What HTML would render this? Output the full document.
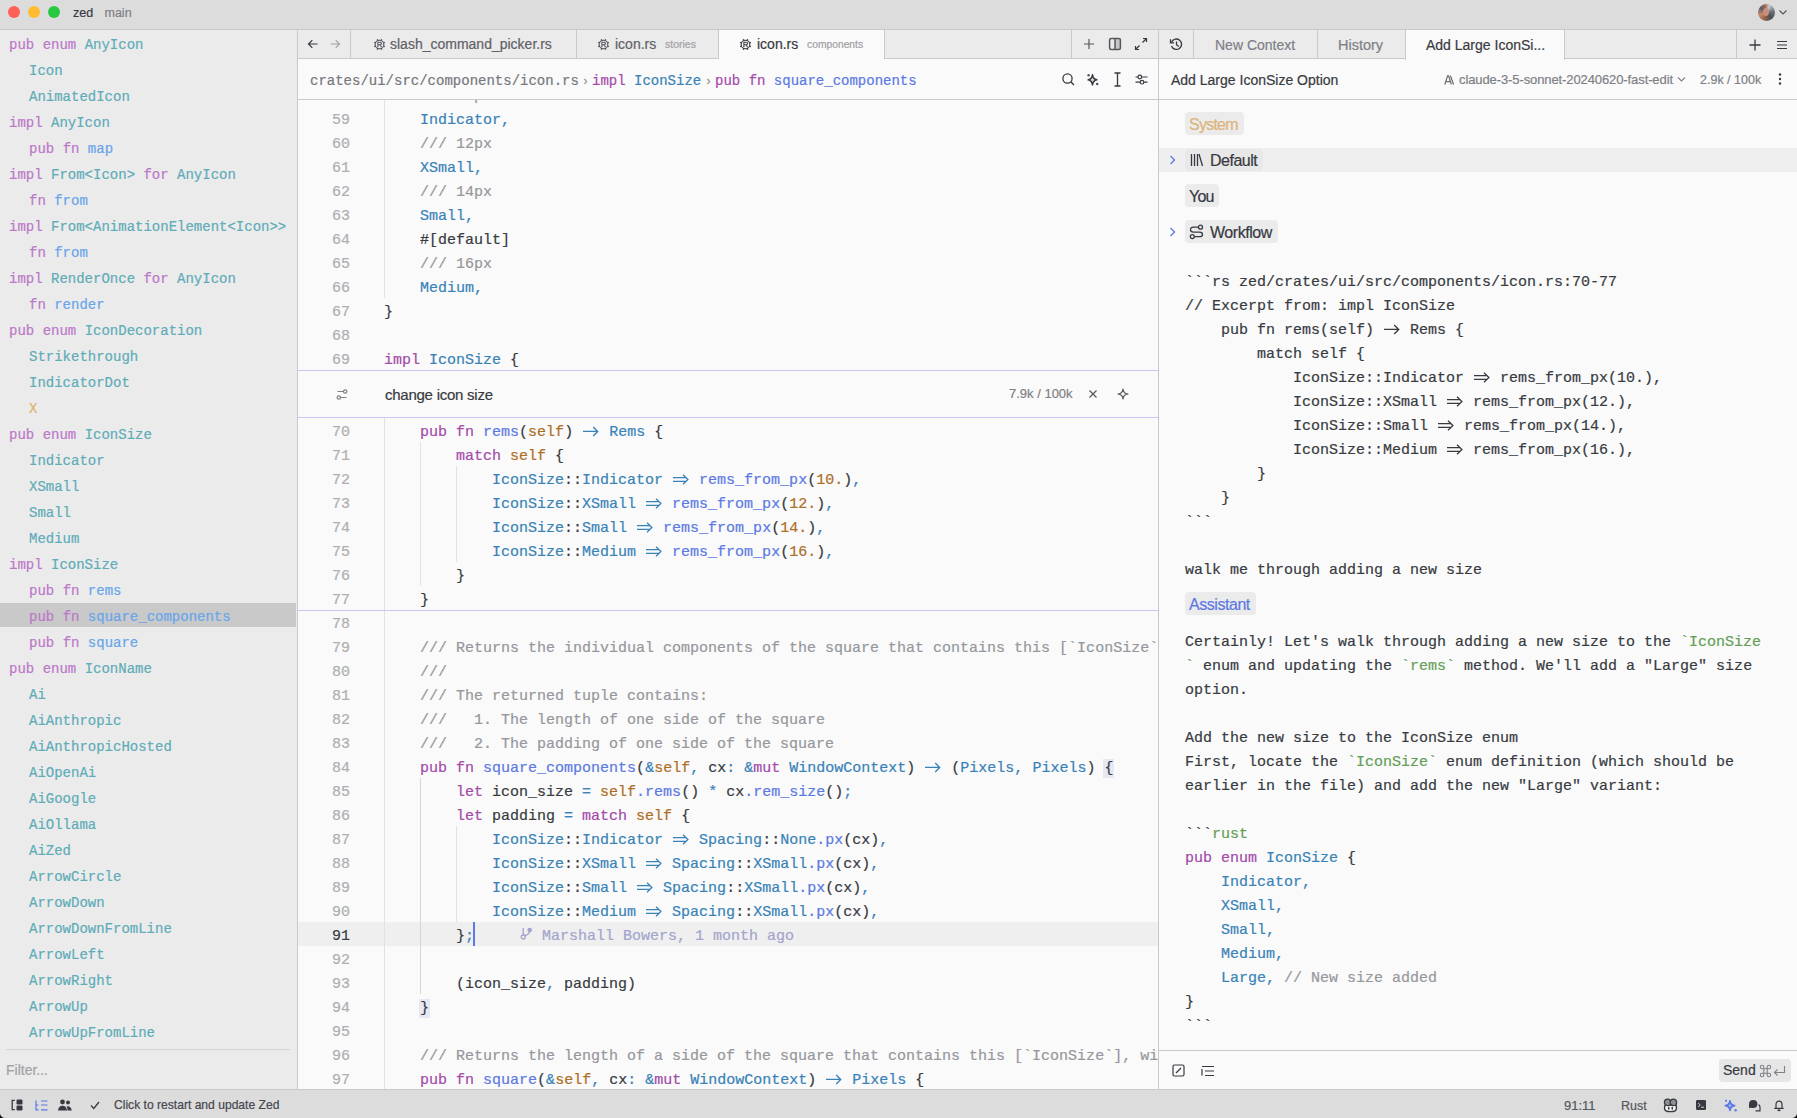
<!DOCTYPE html>
<html><head><meta charset="utf-8">
<style>
*{box-sizing:border-box;margin:0;padding:0}
html,body{-webkit-text-stroke:0.2px currentColor;width:1797px;height:1118px;overflow:hidden;background:#dcdcdd;font-family:"Liberation Sans",sans-serif;color:#383a41}
.abs{position:absolute}
svg{display:block}
/* title */
#title{position:absolute;left:0;top:0;width:1797px;height:30px;background:#dcdcdd;border-bottom:1px solid #c9c9ca}
.tl{position:absolute;top:6px;width:12px;height:12px;border-radius:50%}
/* outline */
#outline{position:absolute;left:0;top:30px;width:298px;height:1059px;background:#ebebec;border-right:1px solid #c9c9ca;overflow:hidden}
.orow{position:absolute;left:0;width:297px;height:26px}
.orow>span{position:absolute;top:1.5px;line-height:26px;font-family:"Liberation Mono",monospace;font-size:14px;white-space:pre;color:#5aa9b4}
.orow.sel{background:linear-gradient(#ebebec 0,#ebebec 1px,#c9c9ca 1px,#c9c9ca 25px,#ebebec 25px);width:296px}
.orow .k{color:#bb78c8}
.orow .t{color:#5eacb7}
.orow .f{color:#68a5ea}
.orow .x{color:#dcb46c}
/* editor pane */
#pane{position:absolute;left:298px;top:30px;width:860px;height:1059px;background:#fafafa;overflow:hidden}
#tabs{position:absolute;left:0;top:0;width:860px;height:29px;background:#ebebec;border-bottom:1px solid #c9c9ca}
.tab{position:absolute;top:0;height:29px;font-size:14px;line-height:28px;white-space:pre;color:#7e8086}
#crumb{position:absolute;left:0;top:29px;width:860px;height:41px;border-bottom:1px solid #c9c9ca;background:#fafafa}
#ed{position:absolute;left:0;top:70px;width:860px;height:989px;overflow:hidden;background:#fafafa}
.lrow{position:absolute;left:0;width:860px;height:24px}
.lrow.act{background:#efeff0}
.ln{position:absolute;right:808px;top:2.5px;line-height:24px;font-family:"Liberation Mono",monospace;font-size:15px;color:#adaeb0}
.lrow.act .ln{color:#383a41}
.lc{position:absolute;left:86px;top:2.5px;line-height:24px;font-family:"Liberation Mono",monospace;font-size:15px;white-space:pre;color:#383a41}
.k{color:#a449ab}
.t{color:#3882b7}
.f{color:#5b79e3}
.s{color:#ad6e26}
.c{color:#96979c}
.o{color:#3882b7}
.g{color:#649f57}
.bm{background:#e6e8f4;outline:1px solid #e6e8f4}
.ar{display:inline-block;width:18px;height:24px;vertical-align:top}
.dar{display:inline-block;width:18px;height:24px;vertical-align:top}
.dar svg{display:inline-block}
/* assistant */
#asst{position:absolute;left:1159px;top:30px;width:638px;height:1059px;background:#fafafa;overflow:hidden}
#atabs{position:absolute;left:0;top:0;width:638px;height:29px;background:#ebebec;border-bottom:1px solid #c9c9ca}
#ahead{position:absolute;left:0;top:29px;width:638px;height:41px;border-bottom:1px solid #c9c9ca}
#abody{position:absolute;left:0;top:70px;width:638px;height:950px;overflow:hidden}
.arow{position:absolute;left:26px;height:24px;line-height:24px;font-family:"Liberation Mono",monospace;font-size:15px;white-space:pre;color:#383a41}
.badge{position:absolute;height:23px;line-height:25px;border-radius:4px;background:#ebebec;font-size:15px;padding:0 4px}
#afoot{position:absolute;left:0;top:1020px;width:638px;height:39px;border-top:1px solid #c9c9ca;background:#fafafa}
/* status */
#status{position:absolute;left:0;top:1089px;width:1797px;height:29px;background:#dcdcdd;border-top:1px solid #c9c9ca}
.st{position:absolute;top:1px;line-height:28px;font-size:12px;color:#383a41;white-space:pre}
.ico{position:absolute}
</style></head><body>

<div id="title">
  <div class="tl" style="left:8px;background:#fe5f57;"></div>
  <div class="tl" style="left:28px;background:#febc2e;"></div>
  <div class="tl" style="left:48px;background:#28c840;"></div>
  <div class="abs" style="left:73px;top:0;line-height:26px;font-size:12.5px;color:#383a41">zed</div>
  <div class="abs" style="left:104.5px;top:0;line-height:26px;font-size:12.5px;color:#7e8086">main</div>
  <div class="abs" style="left:1757.5px;top:3.5px;width:17px;height:17px;border-radius:50%;background:conic-gradient(from 20deg,#c9ccd2 0,#6a6f78 60deg,#4a4e56 120deg,#9a6248 180deg,#c58a70 230deg,#5a5e66 290deg,#a46a50 330deg,#c9ccd2 360deg)"></div>
  <div class="abs" style="left:1763px;top:8px;width:6px;height:8px;border-radius:50%;background:#c8907a"></div>
  <svg class="ico" style="left:1778px;top:8px" width="10" height="8" viewBox="0 0 10 8"><path d="M1.5 2.5L5 6L8.5 2.5" fill="none" stroke="#55575c" stroke-width="1.2"/></svg>
</div>

<div id="outline">
<div class="orow" style="top:0px"><span style="left:9px"><span class="k">pub</span> <span class="k">enum</span> <span class="t">AnyIcon</span></span></div>
<div class="orow" style="top:26px"><span style="left:29px"><span class="t">Icon</span></span></div>
<div class="orow" style="top:52px"><span style="left:29px"><span class="t">AnimatedIcon</span></span></div>
<div class="orow" style="top:78px"><span style="left:9px"><span class="k">impl</span> <span class="t">AnyIcon</span></span></div>
<div class="orow" style="top:104px"><span style="left:29px"><span class="k">pub</span> <span class="k">fn</span> <span class="f">map</span></span></div>
<div class="orow" style="top:130px"><span style="left:9px"><span class="k">impl</span> <span class="t">From&lt;Icon&gt;</span> <span class="k">for</span> <span class="t">AnyIcon</span></span></div>
<div class="orow" style="top:156px"><span style="left:29px"><span class="k">fn</span> <span class="f">from</span></span></div>
<div class="orow" style="top:182px"><span style="left:9px"><span class="k">impl</span> <span class="t">From&lt;AnimationElement&lt;Icon&gt;&gt;</span></span></div>
<div class="orow" style="top:208px"><span style="left:29px"><span class="k">fn</span> <span class="f">from</span></span></div>
<div class="orow" style="top:234px"><span style="left:9px"><span class="k">impl</span> <span class="t">RenderOnce</span> <span class="k">for</span> <span class="t">AnyIcon</span></span></div>
<div class="orow" style="top:260px"><span style="left:29px"><span class="k">fn</span> <span class="f">render</span></span></div>
<div class="orow" style="top:286px"><span style="left:9px"><span class="k">pub</span> <span class="k">enum</span> <span class="t">IconDecoration</span></span></div>
<div class="orow" style="top:312px"><span style="left:29px"><span class="t">Strikethrough</span></span></div>
<div class="orow" style="top:338px"><span style="left:29px"><span class="t">IndicatorDot</span></span></div>
<div class="orow" style="top:364px"><span style="left:29px"><span class="x">X</span></span></div>
<div class="orow" style="top:390px"><span style="left:9px"><span class="k">pub</span> <span class="k">enum</span> <span class="t">IconSize</span></span></div>
<div class="orow" style="top:416px"><span style="left:29px"><span class="t">Indicator</span></span></div>
<div class="orow" style="top:442px"><span style="left:29px"><span class="t">XSmall</span></span></div>
<div class="orow" style="top:468px"><span style="left:29px"><span class="t">Small</span></span></div>
<div class="orow" style="top:494px"><span style="left:29px"><span class="t">Medium</span></span></div>
<div class="orow" style="top:520px"><span style="left:9px"><span class="k">impl</span> <span class="t">IconSize</span></span></div>
<div class="orow" style="top:546px"><span style="left:29px"><span class="k">pub</span> <span class="k">fn</span> <span class="f">rems</span></span></div>
<div class="orow sel" style="top:572px"><span style="left:29px"><span class="k">pub</span> <span class="k">fn</span> <span class="f">square_components</span></span></div>
<div class="orow" style="top:598px"><span style="left:29px"><span class="k">pub</span> <span class="k">fn</span> <span class="f">square</span></span></div>
<div class="orow" style="top:624px"><span style="left:9px"><span class="k">pub</span> <span class="k">enum</span> <span class="t">IconName</span></span></div>
<div class="orow" style="top:650px"><span style="left:29px"><span class="t">Ai</span></span></div>
<div class="orow" style="top:676px"><span style="left:29px"><span class="t">AiAnthropic</span></span></div>
<div class="orow" style="top:702px"><span style="left:29px"><span class="t">AiAnthropicHosted</span></span></div>
<div class="orow" style="top:728px"><span style="left:29px"><span class="t">AiOpenAi</span></span></div>
<div class="orow" style="top:754px"><span style="left:29px"><span class="t">AiGoogle</span></span></div>
<div class="orow" style="top:780px"><span style="left:29px"><span class="t">AiOllama</span></span></div>
<div class="orow" style="top:806px"><span style="left:29px"><span class="t">AiZed</span></span></div>
<div class="orow" style="top:832px"><span style="left:29px"><span class="t">ArrowCircle</span></span></div>
<div class="orow" style="top:858px"><span style="left:29px"><span class="t">ArrowDown</span></span></div>
<div class="orow" style="top:884px"><span style="left:29px"><span class="t">ArrowDownFromLine</span></span></div>
<div class="orow" style="top:910px"><span style="left:29px"><span class="t">ArrowLeft</span></span></div>
<div class="orow" style="top:936px"><span style="left:29px"><span class="t">ArrowRight</span></span></div>
<div class="orow" style="top:962px"><span style="left:29px"><span class="t">ArrowUp</span></span></div>
<div class="orow" style="top:988px"><span style="left:29px"><span class="t">ArrowUpFromLine</span></span></div>
  <div class="abs" style="left:6px;top:1019px;width:284px;height:1px;background:#d5d5d6"></div>
  <div class="abs" style="left:6px;top:1027px;line-height:26px;font-size:14px;color:#a1a1a3">Filter...</div>
</div>

<div id="pane">
  <div id="tabs">
    <div class="abs" style="left:0;top:0;width:53px;height:29px;border-right:1px solid #c9c9ca"></div>
    <svg class="ico" style="left:8px;top:7px" width="14" height="14" viewBox="0 0 14 14"><path d="M11.5 7H2.5M6.3 3.2L2.5 7L6.3 10.8" fill="none" stroke="#383a41" stroke-width="1.2"/></svg>
    <svg class="ico" style="left:30px;top:7px" width="14" height="14" viewBox="0 0 14 14"><path d="M2.5 7H11.5M7.7 3.2L11.5 7L7.7 10.8" fill="none" stroke="#a1a1a3" stroke-width="1.1"/></svg>
    <div class="tab" style="left:52px;width:227px;border-right:1px solid #c9c9ca"></div>
    <div class="tab" style="left:279px;width:142px;border-right:1px solid #c9c9ca"></div>
    <div class="tab" style="left:421px;width:166px;height:30px;background:#fafafa;border-right:1px solid #c9c9ca"></div>
    <svg class="ico" style="left:74.5px;top:7.5px" width="13" height="13" viewBox="0 0 13 13"><circle cx="6.5" cy="6.5" r="4.3" fill="none" stroke="#55575c" stroke-width="1.1"/><path d="M10.47 8.15L11.86 8.72M8.15 10.47L8.72 11.86M4.85 10.47L4.28 11.86M2.53 8.15L1.14 8.72M2.53 4.85L1.14 4.28M4.85 2.53L4.28 1.14M8.15 2.53L8.72 1.14M10.47 4.85L11.86 4.28" stroke="#55575c" stroke-width="1.3"/><path d="M4.9 9.2V4.3H7.2Q8.5 4.3 8.5 5.5Q8.5 6.7 7.2 6.7H4.9M7 6.7L8.6 9.2" fill="none" stroke="#55575c" stroke-width="1.1"/></svg><div class="tab" style="left:92px;color:#5f6166">slash_command_picker.rs</div><svg class="ico" style="left:298.5px;top:7.5px" width="13" height="13" viewBox="0 0 13 13"><circle cx="6.5" cy="6.5" r="4.3" fill="none" stroke="#55575c" stroke-width="1.1"/><path d="M10.47 8.15L11.86 8.72M8.15 10.47L8.72 11.86M4.85 10.47L4.28 11.86M2.53 8.15L1.14 8.72M2.53 4.85L1.14 4.28M4.85 2.53L4.28 1.14M8.15 2.53L8.72 1.14M10.47 4.85L11.86 4.28" stroke="#55575c" stroke-width="1.3"/><path d="M4.9 9.2V4.3H7.2Q8.5 4.3 8.5 5.5Q8.5 6.7 7.2 6.7H4.9M7 6.7L8.6 9.2" fill="none" stroke="#55575c" stroke-width="1.1"/></svg><div class="tab" style="left:317px;color:#5f6166">icon.rs</div><div class="tab" style="left:367px;font-size:10.5px;line-height:29px;color:#a1a1a3">stories</div><svg class="ico" style="left:440.5px;top:7.5px" width="13" height="13" viewBox="0 0 13 13"><circle cx="6.5" cy="6.5" r="4.3" fill="none" stroke="#383a41" stroke-width="1.1"/><path d="M10.47 8.15L11.86 8.72M8.15 10.47L8.72 11.86M4.85 10.47L4.28 11.86M2.53 8.15L1.14 8.72M2.53 4.85L1.14 4.28M4.85 2.53L4.28 1.14M8.15 2.53L8.72 1.14M10.47 4.85L11.86 4.28" stroke="#383a41" stroke-width="1.3"/><path d="M4.9 9.2V4.3H7.2Q8.5 4.3 8.5 5.5Q8.5 6.7 7.2 6.7H4.9M7 6.7L8.6 9.2" fill="none" stroke="#383a41" stroke-width="1.1"/></svg><div class="tab" style="left:459px;color:#383a41">icon.rs</div><div class="tab" style="left:509px;font-size:10.3px;line-height:29px;color:#a1a1a3">components</div>
    <div class="abs" style="left:773px;top:0;width:1px;height:29px;background:#c9c9ca"></div>
    <svg class="ico" style="left:784px;top:7px" width="14" height="14" viewBox="0 0 14 14"><path d="M7 2V12M2 7H12" stroke="#55575c" stroke-width="1.2"/></svg><svg class="ico" style="left:810px;top:7px" width="14" height="14" viewBox="0 0 14 14"><rect x="7" y="2" width="5" height="10" fill="#c5c5c7"/><rect x="1.6" y="1.6" width="10.8" height="10.8" rx="1.5" fill="none" stroke="#55575c" stroke-width="1.5"/><path d="M7 1.5V12.5" stroke="#55575c" stroke-width="1.5"/></svg><svg class="ico" style="left:836px;top:7px" width="14" height="14" viewBox="0 0 14 14"><path d="M8.5 5.5L12.5 1.5M9 1.5H12.5V5M5.5 8.5L1.5 12.5M1.5 9V12.5H5" fill="none" stroke="#383a41" stroke-width="1.2"/></svg>
  </div>
  <div id="crumb">
    <div class="abs" style="left:12px;top:2px;line-height:41px;font-family:'Liberation Mono',monospace;font-size:14px;color:#76787d;white-space:pre">crates/ui/src/components/icon.rs</div><div class="abs" style="left:285.5px;top:1.5px;line-height:40px;font-size:12px;color:#8e9095">›</div><div class="abs" style="left:294px;top:2px;line-height:41px;font-family:'Liberation Mono',monospace;font-size:14px;white-space:pre"><span class="k">impl</span> <span class="t">IconSize</span></div><div class="abs" style="left:408.5px;top:1.5px;line-height:40px;font-size:12px;color:#8e9095">›</div><div class="abs" style="left:417px;top:2px;line-height:41px;font-family:'Liberation Mono',monospace;font-size:14px;white-space:pre"><span class="k">pub</span> <span class="k">fn</span> <span class="f">square_components</span></div><svg class="ico" style="left:763px;top:13px" width="15" height="15" viewBox="0 0 15 15"><circle cx="6.5" cy="6.5" r="4.6" fill="none" stroke="#383a41" stroke-width="1.3"/><path d="M10 10L13 13" stroke="#383a41" stroke-width="1.4"/></svg><svg class="ico" style="left:788px;top:13px" width="15" height="15" viewBox="0 0 15 15"><path d="M6.5 2.8Q7 7 10.8 7.8Q7 8.6 6.5 12.8Q6 8.6 2.2 7.8Q6 7 6.5 2.8Z" fill="#d8d8da" stroke="#383a41" stroke-width="1.6" stroke-linejoin="round"/><circle cx="2.6" cy="3.2" r="1.2" fill="#55575c"/><circle cx="11.2" cy="12" r="1.3" fill="#55575c"/></svg><svg class="ico" style="left:812px;top:12px" width="15" height="17" viewBox="0 0 15 17"><path d="M4.5 2H10.5M4.5 15H10.5M7.5 2.5V14.5" fill="none" stroke="#383a41" stroke-width="1.3"/></svg><svg class="ico" style="left:836px;top:13px" width="15" height="15" viewBox="0 0 15 15"><path d="M1.5 5H4M7.5 5H13.5M1.5 10.2H6M10 10.2H13.5" stroke="#383a41" stroke-width="1.2"/><circle cx="5.8" cy="5" r="1.8" fill="none" stroke="#383a41" stroke-width="1.2"/><circle cx="8" cy="10.2" r="1.8" fill="none" stroke="#383a41" stroke-width="1.2"/></svg>
  </div>
  <div id="ed">
<div class="lrow" style="top:-18px"><span class="ln">58</span><span class="lc">    <span class="c">/// 10px</span></span></div>
<div class="lrow" style="top:6px"><span class="ln">59</span><span class="lc">    <span class="t">Indicator</span><span class="o">,</span></span></div>
<div class="lrow" style="top:30px"><span class="ln">60</span><span class="lc">    <span class="c">/// 12px</span></span></div>
<div class="lrow" style="top:54px"><span class="ln">61</span><span class="lc">    <span class="t">XSmall</span><span class="o">,</span></span></div>
<div class="lrow" style="top:78px"><span class="ln">62</span><span class="lc">    <span class="c">/// 14px</span></span></div>
<div class="lrow" style="top:102px"><span class="ln">63</span><span class="lc">    <span class="t">Small</span><span class="o">,</span></span></div>
<div class="lrow" style="top:126px"><span class="ln">64</span><span class="lc">    #[default]</span></div>
<div class="lrow" style="top:150px"><span class="ln">65</span><span class="lc">    <span class="c">/// 16px</span></span></div>
<div class="lrow" style="top:174px"><span class="ln">66</span><span class="lc">    <span class="t">Medium</span><span class="o">,</span></span></div>
<div class="lrow" style="top:198px"><span class="ln">67</span><span class="lc">}</span></div>
<div class="lrow" style="top:222px"><span class="ln">68</span><span class="lc"></span></div>
<div class="lrow" style="top:246px"><span class="ln">69</span><span class="lc"><span class="k">impl</span> <span class="t">IconSize</span> {</span></div>
<div class="lrow" style="top:318px"><span class="ln">70</span><span class="lc">    <span class="k">pub</span> <span class="k">fn</span> <span class="f">rems</span>(<span class="s">self</span>) <span class="o"><span class="ar"><svg width="18" height="24" viewBox="0 0 18 24"><path d="M1 10.4H15.6M11.2 5.9L15.7 10.4L11.2 14.9" fill="none" stroke="currentColor" stroke-width="1.35"/></svg></span></span> <span class="t">Rems</span> {</span></div>
<div class="lrow" style="top:342px"><span class="ln">71</span><span class="lc">        <span class="k">match</span> <span class="s">self</span> {</span></div>
<div class="lrow" style="top:366px"><span class="ln">72</span><span class="lc">            <span class="t">IconSize</span>::<span class="t">Indicator</span> <span class="o"><span class="dar"><svg width="18" height="24" viewBox="0 0 18 24"><path d="M1 8.6H14.2M1 12.3H14.2M11 5.7L15.9 10.45L11 15.2" fill="none" stroke="currentColor" stroke-width="1.3"/></svg></span></span> <span class="f">rems_from_px</span>(<span class="s">10.</span>)<span class="o">,</span></span></div>
<div class="lrow" style="top:390px"><span class="ln">73</span><span class="lc">            <span class="t">IconSize</span>::<span class="t">XSmall</span> <span class="o"><span class="dar"><svg width="18" height="24" viewBox="0 0 18 24"><path d="M1 8.6H14.2M1 12.3H14.2M11 5.7L15.9 10.45L11 15.2" fill="none" stroke="currentColor" stroke-width="1.3"/></svg></span></span> <span class="f">rems_from_px</span>(<span class="s">12.</span>)<span class="o">,</span></span></div>
<div class="lrow" style="top:414px"><span class="ln">74</span><span class="lc">            <span class="t">IconSize</span>::<span class="t">Small</span> <span class="o"><span class="dar"><svg width="18" height="24" viewBox="0 0 18 24"><path d="M1 8.6H14.2M1 12.3H14.2M11 5.7L15.9 10.45L11 15.2" fill="none" stroke="currentColor" stroke-width="1.3"/></svg></span></span> <span class="f">rems_from_px</span>(<span class="s">14.</span>)<span class="o">,</span></span></div>
<div class="lrow" style="top:438px"><span class="ln">75</span><span class="lc">            <span class="t">IconSize</span>::<span class="t">Medium</span> <span class="o"><span class="dar"><svg width="18" height="24" viewBox="0 0 18 24"><path d="M1 8.6H14.2M1 12.3H14.2M11 5.7L15.9 10.45L11 15.2" fill="none" stroke="currentColor" stroke-width="1.3"/></svg></span></span> <span class="f">rems_from_px</span>(<span class="s">16.</span>)<span class="o">,</span></span></div>
<div class="lrow" style="top:462px"><span class="ln">76</span><span class="lc">        }</span></div>
<div class="lrow" style="top:486px"><span class="ln">77</span><span class="lc">    }</span></div>
<div class="lrow" style="top:510px"><span class="ln">78</span><span class="lc"></span></div>
<div class="lrow" style="top:534px"><span class="ln">79</span><span class="lc">    <span class="c">/// Returns the individual components of the square that contains this [`IconSize`], with padding.</span></span></div>
<div class="lrow" style="top:558px"><span class="ln">80</span><span class="lc">    <span class="c">///</span></span></div>
<div class="lrow" style="top:582px"><span class="ln">81</span><span class="lc">    <span class="c">/// The returned tuple contains:</span></span></div>
<div class="lrow" style="top:606px"><span class="ln">82</span><span class="lc">    <span class="c">///   1. The length of one side of the square</span></span></div>
<div class="lrow" style="top:630px"><span class="ln">83</span><span class="lc">    <span class="c">///   2. The padding of one side of the square</span></span></div>
<div class="lrow" style="top:654px"><span class="ln">84</span><span class="lc">    <span class="k">pub</span> <span class="k">fn</span> <span class="f">square_components</span>(<span class="o">&amp;</span><span class="s">self</span><span class="o">,</span> cx<span class="o">:</span> <span class="o">&amp;</span><span class="k">mut</span> <span class="t">WindowContext</span>) <span class="o"><span class="ar"><svg width="18" height="24" viewBox="0 0 18 24"><path d="M1 10.4H15.6M11.2 5.9L15.7 10.4L11.2 14.9" fill="none" stroke="currentColor" stroke-width="1.35"/></svg></span></span> (<span class="t">Pixels</span><span class="o">,</span> <span class="t">Pixels</span>) <span class="bm">{</span></span></div>
<div class="lrow" style="top:678px"><span class="ln">85</span><span class="lc">        <span class="k">let</span> icon_size <span class="o">=</span> <span class="s">self</span><span class="f">.rems</span>() <span class="o">*</span> cx<span class="f">.rem_size</span>()<span class="o">;</span></span></div>
<div class="lrow" style="top:702px"><span class="ln">86</span><span class="lc">        <span class="k">let</span> padding <span class="o">=</span> <span class="k">match</span> <span class="s">self</span> {</span></div>
<div class="lrow" style="top:726px"><span class="ln">87</span><span class="lc">            <span class="t">IconSize</span>::<span class="t">Indicator</span> <span class="o"><span class="dar"><svg width="18" height="24" viewBox="0 0 18 24"><path d="M1 8.6H14.2M1 12.3H14.2M11 5.7L15.9 10.45L11 15.2" fill="none" stroke="currentColor" stroke-width="1.3"/></svg></span></span> <span class="t">Spacing</span>::<span class="t">None</span><span class="f">.px</span>(cx)<span class="o">,</span></span></div>
<div class="lrow" style="top:750px"><span class="ln">88</span><span class="lc">            <span class="t">IconSize</span>::<span class="t">XSmall</span> <span class="o"><span class="dar"><svg width="18" height="24" viewBox="0 0 18 24"><path d="M1 8.6H14.2M1 12.3H14.2M11 5.7L15.9 10.45L11 15.2" fill="none" stroke="currentColor" stroke-width="1.3"/></svg></span></span> <span class="t">Spacing</span>::<span class="t">XSmall</span><span class="f">.px</span>(cx)<span class="o">,</span></span></div>
<div class="lrow" style="top:774px"><span class="ln">89</span><span class="lc">            <span class="t">IconSize</span>::<span class="t">Small</span> <span class="o"><span class="dar"><svg width="18" height="24" viewBox="0 0 18 24"><path d="M1 8.6H14.2M1 12.3H14.2M11 5.7L15.9 10.45L11 15.2" fill="none" stroke="currentColor" stroke-width="1.3"/></svg></span></span> <span class="t">Spacing</span>::<span class="t">XSmall</span><span class="f">.px</span>(cx)<span class="o">,</span></span></div>
<div class="lrow" style="top:798px"><span class="ln">90</span><span class="lc">            <span class="t">IconSize</span>::<span class="t">Medium</span> <span class="o"><span class="dar"><svg width="18" height="24" viewBox="0 0 18 24"><path d="M1 8.6H14.2M1 12.3H14.2M11 5.7L15.9 10.45L11 15.2" fill="none" stroke="currentColor" stroke-width="1.3"/></svg></span></span> <span class="t">Spacing</span>::<span class="t">XSmall</span><span class="f">.px</span>(cx)<span class="o">,</span></span></div>
<div class="lrow act" style="top:822px"><span class="ln">91</span><span class="lc">        }<span class="o">;</span></span></div>
<div class="lrow" style="top:846px"><span class="ln">92</span><span class="lc"></span></div>
<div class="lrow" style="top:870px"><span class="ln">93</span><span class="lc">        (icon_size<span class="o">,</span> padding)</span></div>
<div class="lrow" style="top:894px"><span class="ln">94</span><span class="lc">    <span class="bm">}</span></span></div>
<div class="lrow" style="top:918px"><span class="ln">95</span><span class="lc"></span></div>
<div class="lrow" style="top:942px"><span class="ln">96</span><span class="lc">    <span class="c">/// Returns the length of a side of the square that contains this [`IconSize`], with padding.</span></span></div>
<div class="lrow" style="top:966px"><span class="ln">97</span><span class="lc">    <span class="k">pub</span> <span class="k">fn</span> <span class="f">square</span>(<span class="o">&amp;</span><span class="s">self</span><span class="o">,</span> cx<span class="o">:</span> <span class="o">&amp;</span><span class="k">mut</span> <span class="t">WindowContext</span>) <span class="o"><span class="ar"><svg width="18" height="24" viewBox="0 0 18 24"><path d="M1 10.4H15.6M11.2 5.9L15.7 10.4L11.2 14.9" fill="none" stroke="currentColor" stroke-width="1.35"/></svg></span></span> <span class="t">Pixels</span> {</span></div>
<div class="lrow" style="top:990px"><span class="ln">98</span><span class="lc">        <span class="k">let</span> icon_size <span class="o">=</span> <span class="s">self</span><span class="f">.rems</span>() <span class="o">*</span> cx<span class="f">.rem_size</span>()<span class="o">;</span></span></div>
    <div class="abs" style="left:86px;top:0px;width:1px;height:198px;background:#e2e2e3"></div><div class="abs" style="left:86px;top:318px;width:1px;height:671px;background:#e2e2e3"></div><div class="abs" style="left:122px;top:342px;width:1px;height:144px;background:#e2e2e3"></div><div class="abs" style="left:158px;top:366px;width:1px;height:96px;background:#e2e2e3"></div><div class="abs" style="left:122px;top:678px;width:1px;height:216px;background:#d5d5d7"></div><div class="abs" style="left:158px;top:726px;width:1px;height:96px;background:#e2e2e3"></div><div class="abs" style="left:0;top:270px;width:860px;height:1px;background:#c7c9f4"></div><div class="abs" style="left:0;top:317px;width:860px;height:1px;background:#c7c9f4"></div><div class="abs" style="left:0;top:510px;width:860px;height:1px;background:#c7c9f4"></div><div class="abs" style="left:0;top:271px;width:860px;height:46px;background:#fafafa"></div><svg class="ico" style="left:38px;top:288px" width="12" height="13" viewBox="0 0 12 13"><path d="M1.5 3.5H7.5M4.5 9.5H10.5" stroke="#7e8086" stroke-width="1.2"/><circle cx="9.2" cy="3.5" r="1.7" fill="none" stroke="#7e8086" stroke-width="1.2"/><circle cx="2.8" cy="9.5" r="1.7" fill="none" stroke="#7e8086" stroke-width="1.2"/></svg><div class="abs" style="left:87px;top:283px;line-height:24px;font-size:15px;letter-spacing:-0.25px;color:#383a41;white-space:pre">change icon size</div><div class="abs" style="left:711px;top:282px;line-height:24px;font-size:13px;color:#7e8086;white-space:pre">7.9k / 100k</div><svg class="ico" style="left:790px;top:289px" width="10" height="10" viewBox="0 0 10 10"><path d="M1.5 1.5L8.5 8.5M8.5 1.5L1.5 8.5" stroke="#55575c" stroke-width="1.2"/></svg><svg class="ico" style="left:819px;top:288px" width="12" height="12" viewBox="0 0 12 12"><path d="M6 1Q6.4 5.6 11 6Q6.4 6.4 6 11Q5.6 6.4 1 6Q5.6 5.6 6 1Z" fill="none" stroke="#55575c" stroke-width="1.2" stroke-linejoin="round"/></svg><div class="abs" style="left:175px;top:822px;width:2px;height:24px;background:#5c78e2"></div><svg class="ico" style="left:222px;top:827px" width="13" height="13" viewBox="0 0 13 13"><circle cx="3.2" cy="10" r="2" fill="none" stroke="#a3a4cc" stroke-width="1.3"/><path d="M3.2 1V8M3.8 8.6Q9.5 8 9.6 4" fill="none" stroke="#a3a4cc" stroke-width="1.3"/><circle cx="9.7" cy="3" r="2.3" fill="#a3a4cc"/></svg><div class="abs" style="left:244px;top:824.5px;line-height:24px;font-family:'Liberation Mono',monospace;font-size:15px;color:#a3a4cc;white-space:pre">Marshall Bowers, 1 month ago</div>
  </div>
</div>
<div class="abs" style="left:1158px;top:30px;width:1px;height:1059px;background:#c9c9ca"></div>

<div id="asst">
  <div id="atabs">
    <svg class="ico" style="left:10px;top:7px" width="15" height="15" viewBox="0 0 15 15"><path d="M2.6 5.2A5.2 5.2 0 1 1 2.5 9" fill="none" stroke="#383a41" stroke-width="1.3"/><path d="M1.5 2.2V5.8H5" fill="none" stroke="#383a41" stroke-width="1.3"/><path d="M7.5 4.5V7.8L9.8 9.6" fill="none" stroke="#383a41" stroke-width="1.3"/></svg><div class="abs" style="left:34px;top:0;width:1px;height:29px;background:#c9c9ca"></div><div class="tab" style="left:56px;top:1px;color:#7e8086">New Context</div><div class="abs" style="left:158px;top:0;width:1px;height:29px;background:#c9c9ca"></div><div class="tab" style="left:179px;top:1px;color:#7e8086;font-size:14.5px">History</div><div class="abs" style="left:246px;top:0;width:160px;height:30px;background:#fafafa;border-left:1px solid #c9c9ca;border-right:1px solid #c9c9ca"></div><div class="tab" style="left:267px;top:1px;color:#383a41;font-size:14px">Add Large IconSi...</div><div class="abs" style="left:577px;top:0;width:1px;height:29px;background:#c9c9ca"></div><svg class="ico" style="left:589px;top:8px" width="14" height="14" viewBox="0 0 14 14"><path d="M7 1.5V12.5M1.5 7H12.5" stroke="#383a41" stroke-width="1.3"/></svg><svg class="ico" style="left:617px;top:9px" width="12" height="12" viewBox="0 0 12 12"><path d="M1 2.5H11M1 6H11M1 9.5H11" stroke="#383a41" stroke-width="1.2"/></svg>
  </div>
  <div id="ahead">
    <div class="abs" style="left:12px;top:1px;line-height:41px;font-size:14px;color:#383a41;white-space:pre">Add Large IconSize Option</div><svg class="ico" style="left:285px;top:16px" width="11" height="10" viewBox="0 0 11 10"><path d="M0.8 9.5L3.6 0.8H4.6L7.4 9.5M2 6.6H6.2M6.4 0.8L9.6 9.5" fill="none" stroke="#6a6c71" stroke-width="1.2"/></svg><div class="abs" style="left:300px;top:0;line-height:41px;font-size:13px;color:#7e8086;white-space:pre;letter-spacing:-0.1px">claude-3-5-sonnet-20240620-fast-edit</div><svg class="ico" style="left:518px;top:17px" width="9" height="7" viewBox="0 0 9 7"><path d="M1 1.5L4.5 5L8 1.5" fill="none" stroke="#7e8086" stroke-width="1.1"/></svg><div class="abs" style="left:541px;top:1px;line-height:41px;font-size:12.5px;color:#7e8086;white-space:pre">2.9k / 100k</div><svg class="ico" style="left:619px;top:13px" width="4" height="14" viewBox="0 0 4 14"><circle cx="2" cy="2.5" r="1.2" fill="#383a41"/><circle cx="2" cy="7" r="1.2" fill="#383a41"/><circle cx="2" cy="11.5" r="1.2" fill="#383a41"/></svg>
  </div>
  <div id="abody">
    <div class="badge" style="left:26px;top:12px;width:59px;color:#dcb47a;letter-spacing:-0.75px;font-size:16px">System</div><div class="abs" style="left:0;top:48px;width:638px;height:24px;background:#efeff0"></div><svg class="ico" style="left:10px;top:55px" width="7" height="10" viewBox="0 0 7 10"><path d="M1.5 1L5.5 5L1.5 9" fill="none" stroke="#5c78e2" stroke-width="1.3"/></svg><div class="badge" style="left:26px;top:49px;width:78px;height:22px;background:#e8e8e9"></div><svg class="ico" style="left:31px;top:53px" width="14" height="14" viewBox="0 0 14 14"><path d="M1.5 1V13M4.5 1V13M7.5 1V13M9 1L12.5 13" stroke="#383a41" stroke-width="1.3"/></svg><div class="abs" style="left:51px;top:49px;line-height:24px;font-size:16px;letter-spacing:-0.5px;color:#383a41">Default</div><div class="badge" style="left:26px;top:84px;width:34px;color:#383a41;letter-spacing:-0.8px;font-size:16px">You</div><svg class="ico" style="left:10px;top:127px" width="7" height="10" viewBox="0 0 7 10"><path d="M1.5 1L5.5 5L1.5 9" fill="none" stroke="#5c78e2" stroke-width="1.3"/></svg><div class="badge" style="left:26px;top:120px;width:93px"></div><svg class="ico" style="left:30px;top:124px" width="15" height="16" viewBox="0 0 15 16"><circle cx="11.5" cy="3.2" r="2" fill="none" stroke="#383a41" stroke-width="1.3"/><circle cx="3.3" cy="12.6" r="2" fill="none" stroke="#383a41" stroke-width="1.3"/><path d="M9.5 3.2H4.5Q1.5 3.2 1.5 5.8Q1.5 8.2 4.5 8.2H10.5Q13.5 8.2 13.5 10.4Q13.5 12.6 10.5 12.6H5.3" fill="none" stroke="#383a41" stroke-width="1.3"/></svg><div class="abs" style="left:51px;top:121px;line-height:24px;font-size:16px;letter-spacing:-0.45px;color:#383a41">Workflow</div><div class="badge" style="left:26px;top:492px;width:71px;color:#5c78e2;letter-spacing:-0.45px;font-size:16px">Assistant</div>
<div class="arow" style="top:170.5px">```rs zed/crates/ui/src/components/icon.rs:70-77</div>
<div class="arow" style="top:194.5px">// Excerpt from: impl IconSize</div>
<div class="arow" style="top:218.5px">    pub fn rems(self) <span class="ar"><svg width="18" height="24" viewBox="0 0 18 24"><path d="M1 10.4H15.6M11.2 5.9L15.7 10.4L11.2 14.9" fill="none" stroke="currentColor" stroke-width="1.35"/></svg></span> Rems {</div>
<div class="arow" style="top:242.5px">        match self {</div>
<div class="arow" style="top:266.5px">            IconSize::Indicator <span class="dar"><svg width="18" height="24" viewBox="0 0 18 24"><path d="M1 8.6H14.2M1 12.3H14.2M11 5.7L15.9 10.45L11 15.2" fill="none" stroke="currentColor" stroke-width="1.3"/></svg></span> rems_from_px(10.),</div>
<div class="arow" style="top:290.5px">            IconSize::XSmall <span class="dar"><svg width="18" height="24" viewBox="0 0 18 24"><path d="M1 8.6H14.2M1 12.3H14.2M11 5.7L15.9 10.45L11 15.2" fill="none" stroke="currentColor" stroke-width="1.3"/></svg></span> rems_from_px(12.),</div>
<div class="arow" style="top:314.5px">            IconSize::Small <span class="dar"><svg width="18" height="24" viewBox="0 0 18 24"><path d="M1 8.6H14.2M1 12.3H14.2M11 5.7L15.9 10.45L11 15.2" fill="none" stroke="currentColor" stroke-width="1.3"/></svg></span> rems_from_px(14.),</div>
<div class="arow" style="top:338.5px">            IconSize::Medium <span class="dar"><svg width="18" height="24" viewBox="0 0 18 24"><path d="M1 8.6H14.2M1 12.3H14.2M11 5.7L15.9 10.45L11 15.2" fill="none" stroke="currentColor" stroke-width="1.3"/></svg></span> rems_from_px(16.),</div>
<div class="arow" style="top:362.5px">        }</div>
<div class="arow" style="top:386.5px">    }</div>
<div class="arow" style="top:410.5px">```</div>
<div class="arow" style="top:458.5px">walk me through adding a new size</div>
<div class="arow" style="top:530.5px">Certainly! Let's walk through adding a new size to the <span class="g">`IconSize</span></div>
<div class="arow" style="top:554.5px"><span class="g">`</span> enum and updating the <span class="g">`rems`</span> method. We'll add a "Large" size</div>
<div class="arow" style="top:578.5px">option.</div>
<div class="arow" style="top:626.5px">Add the new size to the IconSize enum</div>
<div class="arow" style="top:650.5px">First, locate the <span class="g">`IconSize`</span> enum definition (which should be</div>
<div class="arow" style="top:674.5px">earlier in the file) and add the new "Large" variant:</div>
<div class="arow" style="top:722.5px">```<span class="g">rust</span></div>
<div class="arow" style="top:746.5px"><span class="k">pub</span> <span class="k">enum</span> <span class="t">IconSize</span> {</div>
<div class="arow" style="top:770.5px">    <span class="t">Indicator</span><span class="o">,</span></div>
<div class="arow" style="top:794.5px">    <span class="t">XSmall</span><span class="o">,</span></div>
<div class="arow" style="top:818.5px">    <span class="t">Small</span><span class="o">,</span></div>
<div class="arow" style="top:842.5px">    <span class="t">Medium</span><span class="o">,</span></div>
<div class="arow" style="top:866.5px">    <span class="t">Large</span><span class="o">,</span> <span class="c">// New size added</span></div>
<div class="arow" style="top:890.5px">}</div>
<div class="arow" style="top:914.5px">```</div>
  </div>
  <div id="afoot">
    <svg class="ico" style="left:13px;top:12.5px" width="13" height="13" viewBox="0 0 13 13"><rect x="1" y="1" width="11" height="11" rx="1.5" fill="none" stroke="#383a41" stroke-width="1.2"/><path d="M4 9L9 4" stroke="#383a41" stroke-width="1.2"/></svg><svg class="ico" style="left:42px;top:13.5px" width="14" height="12" viewBox="0 0 14 12"><path d="M1 1.5H13M4 6H13M4 10.5H13M1 4V10.5" fill="none" stroke="#383a41" stroke-width="1.2"/></svg><div class="abs" style="left:560px;top:8px;width:72px;height:23px;border-radius:4px;background:#e6e6e7"></div><div class="abs" style="left:564px;top:8px;line-height:23px;font-size:14px;color:#383a41">Send</div><svg class="ico" style="left:600px;top:13px" width="28" height="14" viewBox="0 0 28 14"><path d="M4.8 4.8V9.2M8.2 4.8V9.2M3 4.8H10M3 9.2H10M4.8 4.8H3A1.75 1.75 0 1 1 4.8 3V4.8M8.2 4.8V3A1.75 1.75 0 1 1 10 4.8H8.2M8.2 9.2H10A1.75 1.75 0 1 1 8.2 11V9.2M4.8 9.2V11A1.75 1.75 0 1 1 3 9.2H4.8" fill="none" stroke="#7e8086" stroke-width="1.05"/><path d="M25.5 2V8.5H15.5M18.5 5.5L15.5 8.5L18.5 11.5" fill="none" stroke="#7e8086" stroke-width="1.1"/></svg>
  </div>
</div>

<div id="status">
  <svg class="ico" style="left:11px;top:9px" width="12" height="12" viewBox="0 0 12 12"><path d="M1.2 0.8V11.2M1.2 1.4H3.8M1.2 10.6H3.8" fill="none" stroke="#383a41" stroke-width="1.3"/><rect x="5.5" y="0.5" width="6" height="5" rx="1.2" fill="#383a41"/><rect x="5.5" y="6.5" width="6" height="5" rx="1.2" fill="#383a41"/></svg><svg class="ico" style="left:35px;top:10px" width="13" height="11" viewBox="0 0 13 11"><path d="M1 0.5V9.8H3.5M1 5H3.5M6 1H12.5M6 5H12.5M6 9.8H12.5" fill="none" stroke="#5c78e2" stroke-width="1.2"/></svg><svg class="ico" style="left:58px;top:9px" width="14" height="12" viewBox="0 0 14 12"><circle cx="4.5" cy="3" r="2.4" fill="#383a41"/><circle cx="10" cy="3.5" r="2" fill="#383a41"/><path d="M0 11.5Q0.5 6.8 4.5 6.8Q8.5 6.8 9 11.5Z M9.5 11.5Q9.6 8.5 8.6 7.3Q12.8 6.5 13.8 11.5Z" fill="#383a41"/></svg><svg class="ico" style="left:90px;top:11px" width="10" height="9" viewBox="0 0 10 9"><path d="M1 4.5L3.8 7.5L9 1" fill="none" stroke="#383a41" stroke-width="1.3"/></svg><div class="st" style="left:114px;font-size:12.1px;color:#45474d">Click to restart and update Zed</div><div class="st" style="left:1564px;top:2px;font-size:13px;color:#55575c">91:11</div><div class="st" style="left:1621px;top:2px;font-size:12.5px;color:#55575c">Rust</div><svg class="ico" style="left:1662.5px;top:7.5px" width="15" height="15" viewBox="0 0 15 15"><path d="M1.6 9Q1.4 7 3.2 7H11.8Q13.6 7 13.4 9V10.4Q13.4 13.6 7.5 13.6Q1.6 13.6 1.6 10.4Z" fill="#f3f3f3" stroke="#383a41" stroke-width="1.4"/><circle cx="4.6" cy="4.4" r="3.2" fill="#8e8f93" stroke="#383a41" stroke-width="1.3"/><circle cx="10.4" cy="4.4" r="3.2" fill="#8e8f93" stroke="#383a41" stroke-width="1.3"/><rect x="5" y="8.8" width="1.5" height="3" rx="0.7" fill="#383a41"/><rect x="8.5" y="8.8" width="1.5" height="3" rx="0.7" fill="#383a41"/></svg><svg class="ico" style="left:1696px;top:10px" width="10" height="10" viewBox="0 0 10 10"><rect x="0" y="0" width="10" height="10" rx="1.3" fill="#383a41"/><path d="M2.2 3L4.2 5L2.2 7M5 7.2H8" fill="none" stroke="#c8c8ca" stroke-width="1"/></svg><svg class="ico" style="left:1724px;top:9px" width="14" height="13" viewBox="0 0 14 13"><path d="M6 1.8Q6.5 6 10.6 6.6Q6.5 7.2 6 11.4Q5.5 7.2 1.4 6.6Q5.5 6 6 1.8Z" fill="#9fb0ee" stroke="#5c78e2" stroke-width="1.7" stroke-linejoin="round"/><circle cx="2" cy="1.8" r="1.1" fill="#5c78e2"/><circle cx="11.6" cy="11.2" r="1.2" fill="#5c78e2"/></svg><svg class="ico" style="left:1748px;top:9px" width="13" height="13" viewBox="0 0 13 13"><path d="M1 5.2Q1 1 5.2 1Q9.4 1 9.4 5Q9.4 9 5.2 9Q3.5 9 2.5 8.5L1 9.5Z" fill="#383a41"/><path d="M10.6 5.5Q12 6.5 12 8.2V11.8H7.5" fill="none" stroke="#383a41" stroke-width="1.2"/></svg><svg class="ico" style="left:1774px;top:10px" width="10" height="12" viewBox="0 0 10 12"><path d="M2 8.2V4.8Q2 1.2 5 1.2Q8 1.2 8 4.8V8.2L9.2 8.4H0.8Z" fill="none" stroke="#383a41" stroke-width="1.2" stroke-linejoin="round"/><path d="M3.7 9.8Q5 11.2 6.3 9.8" fill="none" stroke="#383a41" stroke-width="1.3"/></svg>
</div>
<div class="abs" style="left:0;top:1113px;width:5px;height:5px;background:radial-gradient(circle at 5px 0,transparent 4.5px,#000 5.5px)"></div>
<div class="abs" style="left:1792px;top:1113px;width:5px;height:5px;background:radial-gradient(circle at 0 0,transparent 4.5px,#000 5.5px)"></div>
</body></html>
